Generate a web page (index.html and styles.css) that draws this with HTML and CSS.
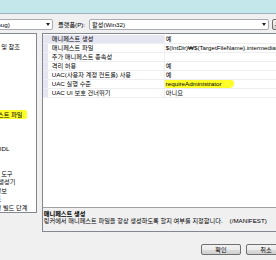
FILE: index.html
```html
<!DOCTYPE html>
<html lang="ko">
<head>
    <meta charset="UTF-8">
    <title>속성 페이지</title>
    <link rel="stylesheet" href="styles.css">
</head>
<body>
    <div class="glass"></div>
    <div class="dialog">
        <div class="config-row">
            <div class="combo combo-config"><span class="combo-text">활성(Debug)</span><span class="arrow"></span></div>
            <span class="platform-label">플랫폼(P):</span>
            <div class="combo combo-platform"><span class="combo-text">활성(Win32)</span><span class="arrow"></span></div>
            <button class="btn btn-manager">구성 관리자(O)...</button>
        </div>

        <div class="main">
            <div class="tree">
                <ul class="tree-list">
                    <li class="l0">공용 속성</li>
                    <li class="l1">프레임워크 및 참조</li>
                    <li class="l0">구성 속성</li>
                    <li class="l1">일반</li>
                    <li class="l1">디버깅</li>
                    <li class="l1">C/C++</li>
                    <li class="l1">링커</li>
                    <li class="l2">일반</li>
                    <li class="l2">입력</li>
                    <li class="l2"><span class="mark tree-mark">매니페스트 파일</span></li>
                    <li class="l2">디버깅</li>
                    <li class="l2">시스템</li>
                    <li class="l2">최적화</li>
                    <li class="l2">포함된 IDL</li>
                    <li class="l2">고급</li>
                    <li class="l2">명령줄</li>
                    <li class="l1">매니페스트 도구</li>
                    <li class="l1">XML 문서 생성기</li>
                    <li class="l1">찾아보기 정보</li>
                    <li class="l1">빌드 이벤트</li>
                    <li class="l1">사용자 지정 빌드 단계</li>
                    <li class="l1">코드 분석</li>
                </ul>
            </div>

            <div class="props">
                <div class="grid">
                    <div class="row selected"><div class="gutter"></div><div class="name">매니페스트 생성</div><div class="value">예</div></div>
                    <div class="row"><div class="gutter"></div><div class="name">매니페스트 파일</div><div class="value">$(IntDir)₩$(TargetFileName).intermediate.manifest</div></div>
                    <div class="row"><div class="gutter"></div><div class="name">추가 매니페스트 종속성</div><div class="value"></div></div>
                    <div class="row"><div class="gutter"></div><div class="name">격리 허용</div><div class="value">예</div></div>
                    <div class="row"><div class="gutter"></div><div class="name">UAC(사용자 계정 컨트롤) 사용</div><div class="value">예</div></div>
                    <div class="row"><div class="gutter"></div><div class="name">UAC 실행 수준</div><div class="value"><span class="mark value-mark">requireAdministrator</span></div></div>
                    <div class="row"><div class="gutter"></div><div class="name">UAC UI 보호 건너뛰기</div><div class="value">아니요</div></div>
                </div>
                <div class="desc">
                    <div class="desc-title">매니페스트 생성</div>
                    <div class="desc-text">링커에서 매니페스트 파일을 항상 생성하도록 할지 여부를 지정합니다.<span class="switch">(/MANIFEST)</span></div>
                </div>
            </div>
        </div>

        <div class="buttons">
            <button class="btn">확인</button>
            <button class="btn">취소</button>
            <button class="btn">적용(A)</button>
        </div>
    </div>
    <div class="frame-bottom"></div>
</body>
</html>
```

FILE: styles.css
```css
* { margin: 0; padding: 0; box-sizing: border-box; }
body {
    width: 276px;
    height: 260px;
    overflow: hidden;
    font-family: "Liberation Sans", "Noto Sans CJK KR", sans-serif;
    font-size: 6.2px;
    color: #000;
    background: #f0f0f0;
}
.glass { height: 14px; background: #c3e7eb; border-bottom: 1px solid #9fb4b9; }
.dialog { height: 241px; width: 340px; background: #f0f0f0; }

/* configuration / platform row */
.config-row { display: flex; align-items: center; height: 11px; margin-top: 5px; white-space: nowrap; }
.combo {
    display: flex;
    align-items: center;
    height: 11px;
    background: #fff;
    border: 1px solid #a9abb2;
    border-radius: 2px;
    overflow: hidden;
}
.combo-text { flex: 1; padding-left: 2px; line-height: 9px; }
.arrow {
    width: 0; height: 0;
    border-left: 2px solid transparent;
    border-right: 2px solid transparent;
    border-top: 3px solid #222;
    margin-right: 2px;
}
.combo-config { width: 80px; margin-left: -27px; }
.platform-label { margin-left: 5px; width: 31px; }
.combo-platform { width: 180px; }

.btn {
    height: 11px;
    width: 40px;
    font-family: inherit;
    font-size: 6.2px;
    line-height: 9px;
    color: #000;
    border: 1px solid #707070;
    border-radius: 2px;
    background: linear-gradient(#f3f3f3, #ebebeb 50%, #dddddd 50%, #d0d0d0);
}
.btn-manager { margin-left: 3px; width: 50px; }

/* tree + property grid */
.main { display: flex; align-items: flex-start; gap: 5px; margin-top: 3px; height: 199px; }
.tree {
    width: 41px;
    height: 180px;
    margin-left: -4px;
    background: #fff;
    border: 1px solid #828790;
    overflow: hidden;
}
.tree-list { list-style: none; margin-left: -35px; padding-top: 1px; white-space: nowrap; }
.tree-list li { height: 8.45px; line-height: 8.45px; }
.l1 { padding-left: 9px; }
.l2 { padding-left: 19px; }

.mark { background: #fdfd2a; border-radius: 2px; }
.tree-mark { padding: 1px 4px 1px 0; }
.value-mark { padding: 1px 13px 1px 2px; margin-left: -2px; border-radius: 3px 5px 5px 3px; }

.props {
    width: 300px;
    height: 199px;
    border: 1px solid #828790;
    background: #fff;
    display: flex;
    flex-direction: column;
}
.grid { flex: 1; padding-top: 1px; }
.row { display: flex; height: 9px; line-height: 8px; border-bottom: 1px solid #eeeef2; white-space: nowrap; }
.gutter { width: 5px; background: #e6e6f2; }
.name { width: 117px; padding-left: 4px; border-right: 1px solid #eeeef2; overflow: hidden; }
.value { flex: 1; padding-left: 1px; overflow: hidden; }
.selected .name { background: #e6e6f2; }

.desc { height: 24px; background: #f0f0f0; border-top: 1px solid #a0a0a0; padding: 2px 1px; line-height: 7.2px; white-space: nowrap; }
.desc-title { font-weight: bold; }
.switch { margin-left: 7px; }

.buttons { display: flex; gap: 5px; margin-top: 12px; padding-left: 201px; }

.frame-bottom { height: 5px; background: #cadcf0; border-top: 1px solid #8fa8c6; }
```
